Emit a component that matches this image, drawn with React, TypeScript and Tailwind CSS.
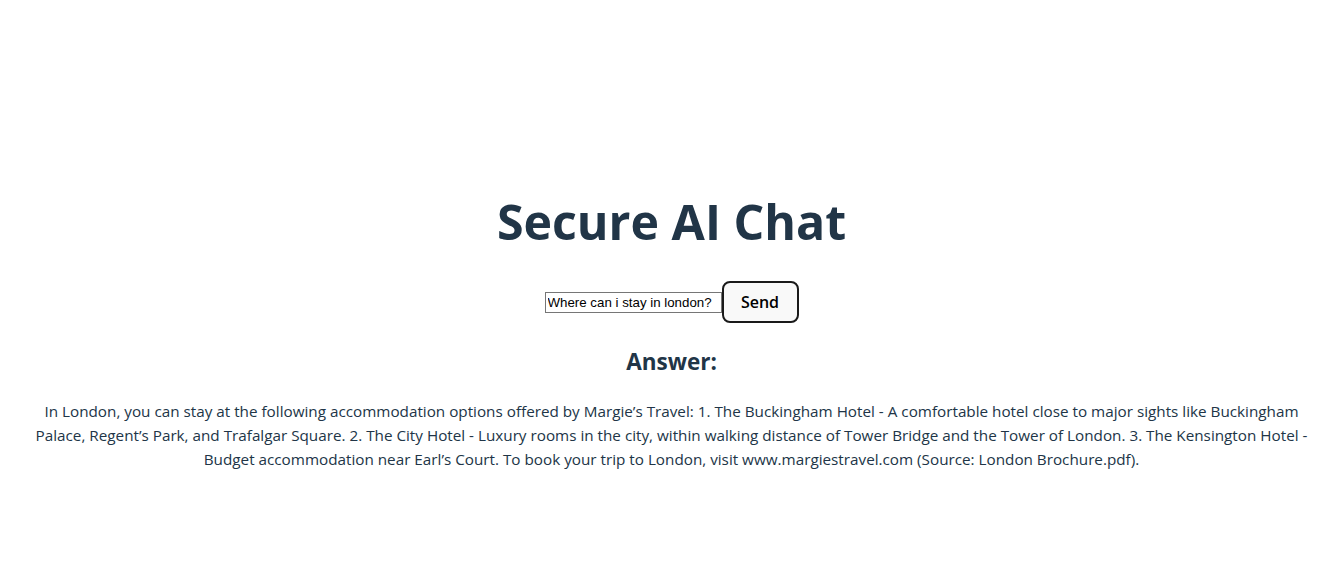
import React, { useState } from 'react';

const answer =
  "In London, you can stay at the following accommodation options offered by Margie’s Travel: 1. The Buckingham Hotel - A comfortable hotel close to major sights like Buckingham Palace, Regent’s Park, and Trafalgar Square. 2. The City Hotel - Luxury rooms in the city, within walking distance of Tower Bridge and the Tower of London. 3. The Kensington Hotel - Budget accommodation near Earl’s Court. To book your trip to London, visit www.margiestravel.com (Source: London Brochure.pdf).";

const App: React.FC = () => {
  const [question, setQuestion] = useState('Where can i stay in london?');

  return (
    <div className="min-h-screen bg-white text-[#213547] font-['Open_Sans',sans-serif]">
      <div className="mx-auto flex w-[1280px] flex-col items-center pt-[195px] text-center">
        <h1 className="text-[48.3px] font-bold leading-[1.1]">Secure AI Chat</h1>

        <div className="mt-[33px] flex items-center">
          <input
            value={question}
            onChange={(e) => setQuestion(e.target.value)}
            className="h-[21px] w-[177px] border border-[#767676] px-[2px] text-[13.3px] text-black font-['Liberation_Sans',Arial,sans-serif] outline-none"
          />
          <button className="h-[42px] w-[77px] rounded-[8px] border-2 border-[#1a1a1a] bg-[#f9f9f9] text-[16px] font-semibold text-black">
            Send
          </button>
        </div>

        <h2 className="mt-[24px] text-[22.5px] font-bold leading-[1.3]">Answer:</h2>
        <p className="mt-[23px] w-[1275px] text-[15.25px] leading-[24px]">{answer}</p>
      </div>
    </div>
  );
};

export default App;
